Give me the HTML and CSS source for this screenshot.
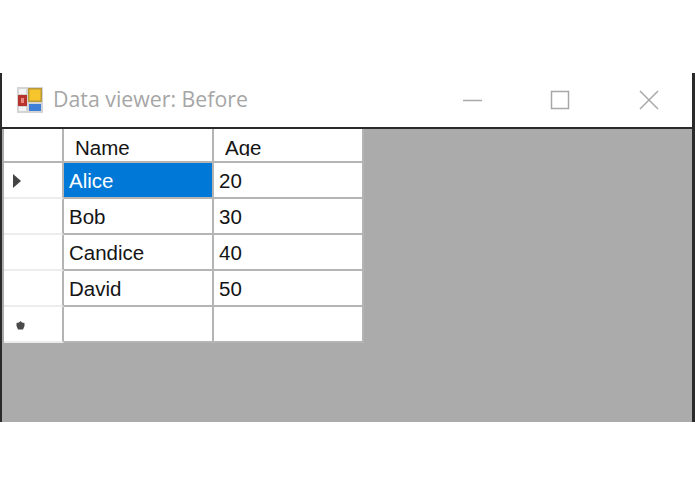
FILE: index.html
```html
<!DOCTYPE html>
<html lang="en">
<head>
  <meta charset="UTF-8">
  <title>Data viewer: Before</title>
  <link rel="stylesheet" href="styles.css">
</head>
<body>
  <div class="window">
    <div class="title-bar">
      <svg class="app-icon" width="28" height="28" viewBox="0 0 28 28">
        <rect x="1" y="1" width="26" height="26" fill="#d4d4d4"/>
        <rect x="3" y="3" width="7" height="5" fill="#f4f4f4"/>
        <rect x="3" y="21" width="7" height="4" fill="#f4f4f4"/>
        <rect x="2" y="9" width="9" height="11" fill="#b8322e"/>
        <rect x="5" y="12" width="3" height="5" fill="#e88a80"/>
        <rect x="12" y="2" width="14" height="14" fill="#b89a3a"/>
        <rect x="13.5" y="3.5" width="11" height="11" fill="#f6c52c"/>
        <rect x="13" y="18" width="12" height="7" fill="#3f7fd8"/>
      </svg>
      <span class="title">Data viewer: Before</span>
      <div class="controls">
        <svg class="control" width="88" height="24" viewBox="0 0 88 24"><path d="M34 12.5H53" stroke="#a8a8a8" stroke-width="1.5" fill="none"/></svg>
        <svg class="control" width="88" height="24" viewBox="0 0 88 24"><rect x="34.5" y="3.5" width="17" height="17" stroke="#a8a8a8" stroke-width="1.5" fill="none"/></svg>
        <svg class="control" width="88" height="24" viewBox="0 0 88 24"><path d="M35 3L53 21M53 3L35 21" stroke="#a8a8a8" stroke-width="1.5" fill="none"/></svg>
      </div>
    </div>
    <div class="client">
      <div class="grid">
        <div class="row-head head-corner"></div>
        <div class="col-head"><span>Name</span></div>
        <div class="col-head"><span>Age</span></div>

        <div class="row-head">
          <svg class="current-row" width="8" height="14" viewBox="0 0 8 14"><path d="M0 0L8 7L0 14Z" fill="#444"/></svg>
        </div>
        <div class="cell selected">Alice</div>
        <div class="cell">20</div>

        <div class="row-head"></div>
        <div class="cell">Bob</div>
        <div class="cell">30</div>

        <div class="row-head"></div>
        <div class="cell">Candice</div>
        <div class="cell">40</div>

        <div class="row-head"></div>
        <div class="cell">David</div>
        <div class="cell">50</div>

        <div class="row-head">
          <svg class="new-row" width="9" height="9" viewBox="0 0 9 9"><path d="M4.5 0L6 1.5L8.5 2L8.5 5L7 8.5H2L0.5 5L0.5 2L3 1.5Z" fill="#4a4a4a"/></svg>
        </div>
        <div class="cell"></div>
        <div class="cell"></div>
      </div>
    </div>
  </div>
</body>
</html>
```

FILE: styles.css
```css
/* Page */
html, body {
  margin: 0;
  height: 494px;
  overflow: hidden;
  background: #fff;
}

body {
  padding-top: 73px;
  box-sizing: border-box;
  font-family: "Liberation Sans", Arial, sans-serif;
}

/* Window frame */
.window {
  height: 349px;
  display: flex;
  flex-direction: column;
  box-sizing: border-box;
  border-left: 2px solid #2a2a2a;
  border-right: 3px solid #2a2a2a;
}

.title-bar {
  height: 54px;
  flex: none;
  display: flex;
  align-items: center;
  padding-left: 14px;
}

.app-icon {
  flex: none;
  margin-right: 9px;
}

.title {
  font-family: "Open Sans", sans-serif;
  font-size: 21.3px;
  line-height: 28px;
  margin-top: -2px;
  color: #a6a6a6;
}

.controls {
  margin-left: auto;
  display: flex;
  margin-right: -1px;
}

.control {
  display: block;
}

/* Grey client area */
.client {
  flex: 1;
  background: #ababab;
  border-top: 2px solid #2a2a2a;
  padding-left: 2px;
}

/* Data grid */
.grid {
  display: grid;
  grid-template-columns: 60px 150px 150px;
  grid-template-rows: 34px repeat(5, 36px);
  width: 360px;
  color: #141414;
  font-size: 20.5px;
}

.row-head,
.col-head,
.cell {
  box-sizing: border-box;
  background: #fff;
  border-right: 2px solid #b4b4b4;
  border-bottom: 2px solid #b4b4b4;
}

.row-head {
  display: flex;
  align-items: center;
  padding-left: 9px;
  border-bottom-color: #ececec;
}

.head-corner {
  border-bottom-color: #b4b4b4;
}

.current-row {
  margin-top: 2px;
}

.new-row {
  margin-top: 3px;
  margin-left: 3px;
}

.col-head {
  padding-left: 11px;
}

/* header text is cut off just under the baseline */
.col-head span {
  display: block;
  height: 27px;
  line-height: 38px;
  overflow: hidden;
}

.cell {
  padding-left: 5px;
  line-height: 36px;
  white-space: nowrap;
}

.selected {
  background: #0078d7;
  color: #fff;
}
```
